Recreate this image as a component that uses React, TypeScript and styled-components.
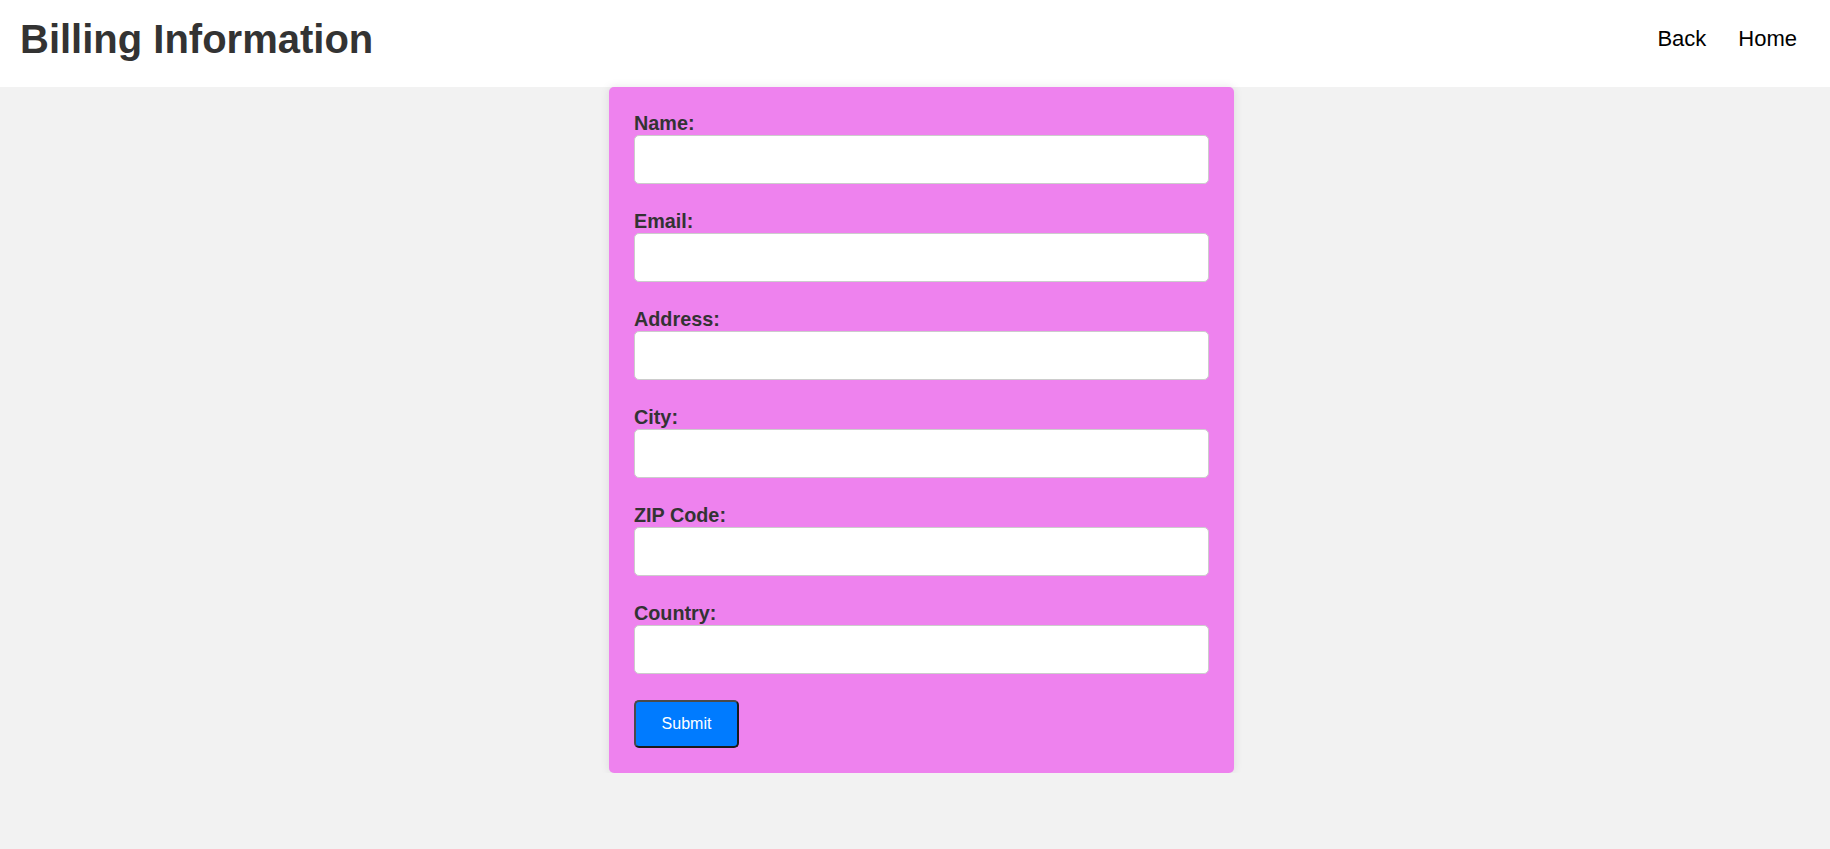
import React from "react";
import styled, { createGlobalStyle } from "styled-components";

const GlobalStyle = createGlobalStyle`
  html, body {
    margin: 0;
    padding: 0;
    background: #f2f2f2;
    font-family: "Liberation Sans", Arial, sans-serif;
  }
  * { box-sizing: border-box; }
`;

const Header = styled.header`
  display: flex;
  align-items: center;
  justify-content: space-between;
  height: 87px;
  padding: 0 33px 9px 20px;
  background: #ffffff;
`;

const Title = styled.h1`
  margin: 0;
  font-size: 40px;
  font-weight: 700;
  color: #333333;
  line-height: 46px;
`;

const Nav = styled.nav`
  display: flex;
  gap: 32px;
`;

const NavLink = styled.a`
  font-size: 22px;
  color: #000000;
  text-decoration: none;
  cursor: pointer;
`;

const Main = styled.main`
  display: flex;
  justify-content: center;
  padding-left: 13px;
`;

const Card = styled.form`
  width: 625px;
  padding: 25px;
  background: #ee82ee;
  border-radius: 5px;
  box-shadow: 0 0 10px rgba(0, 0, 0, 0.1);
  display: flex;
  flex-direction: column;
`;

const Field = styled.div`
  display: flex;
  flex-direction: column;
  margin-bottom: 26px;
`;

const Label = styled.label`
  font-size: 19.8px;
  line-height: 22px;
  font-weight: 700;
  color: #333333;
  margin-bottom: 1px;
`;

const Input = styled.input`
  height: 49px;
  width: 100%;
  padding: 0 12px;
  font-size: 16px;
  font-family: "Liberation Sans", Arial, sans-serif;
  background: #ffffff;
  border: 1px solid #cccccc;
  border-radius: 5px;
  outline: none;
`;

const SubmitButton = styled.button`
  align-self: flex-start;
  width: 105px;
  height: 48px;
  padding: 0;
  font-size: 16px;
  font-family: "Liberation Sans", Arial, sans-serif;
  color: #ffffff;
  background: #007bff;
  border: 2px solid;
  border-color: #4a4a4a #1a1a1a #1a1a1a #4a4a4a;
  border-radius: 5px;
  cursor: pointer;
`;

const fields = ["Name", "Email", "Address", "City", "ZIP Code", "Country"];

export default function App() {
  return (
    <>
      <GlobalStyle />
      <Header>
        <Title>Billing Information</Title>
        <Nav>
          <NavLink>Back</NavLink>
          <NavLink>Home</NavLink>
        </Nav>
      </Header>
      <Main>
        <Card onSubmit={(e) => e.preventDefault()}>
          {fields.map((f) => (
            <Field key={f}>
              <Label htmlFor={f}>{f}:</Label>
              <Input id={f} type="text" />
            </Field>
          ))}
          <SubmitButton type="submit">Submit</SubmitButton>
        </Card>
      </Main>
    </>
  );
}
